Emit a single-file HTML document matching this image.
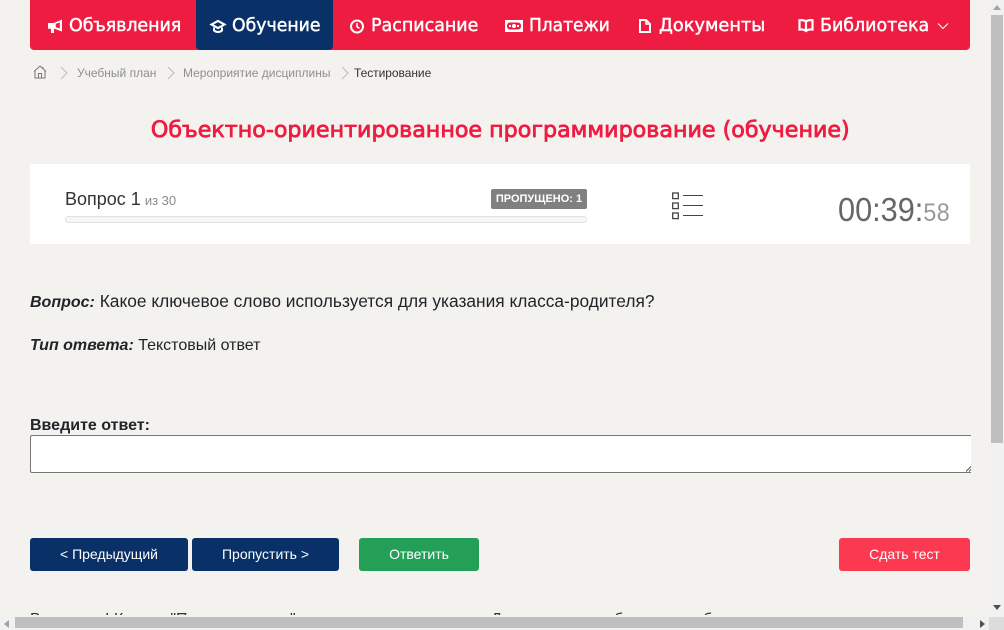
<!DOCTYPE html>
<html lang="ru"><head><meta charset="utf-8"><title>Тестирование</title>
<style>
html,body{margin:0;padding:0;width:1004px;height:630px;overflow:hidden;background:#f3f2ee;font-family:"Liberation Sans",sans-serif;color:#212529}
.a{position:absolute;white-space:nowrap}
.nav{left:30px;top:0;width:940px;height:50px;background:#ef1c42;border-radius:0 0 4px 4px}
.act{left:196px;top:0;width:137px;height:50px;background:#0a3167;border-radius:0 0 4px 4px}
.m{top:14px;height:24px;line-height:24px;font-family:"DejaVu Sans","Liberation Sans",sans-serif;font-size:18px;font-weight:400;color:#fff;-webkit-text-stroke:.45px #fff}
.m span,.h span{display:inline-block;transform-origin:0 50%}
.ic{position:absolute}
.bc{top:66px;font-size:12px;line-height:14px;color:#8f8f8f}
.h{left:0;top:116px;width:1000px;text-align:center;font-family:"DejaVu Sans","Liberation Sans",sans-serif;font-weight:400;-webkit-text-stroke:.8px #ef1c42;font-size:22px;line-height:30px;color:#ef1c42}
.btn{top:538px;height:33px;line-height:32px;border-radius:3px;color:#fff;text-align:center;font-size:14px}
.bt{position:absolute;top:0}
</style></head><body>
<div class="a nav"></div><div class="a act"></div>

<svg class="ic" style="left:47px;top:18px" width="16" height="16" viewBox="0 0 16 16" fill="#fff"><path d="M1 5h6L15 1.500v12L7.500 10.800 H7V15H4V10.800H1z"/><path d="M8.800 5.800 12.800 4.500v6L8.800 9.300z" fill="#ef1c42"/></svg>
<div class="a m" style="left:69px"><span style="letter-spacing:-.1px;transform:scaleX(.973)">Объявления</span></div>

<svg class="ic" style="left:209px;top:19px" width="18" height="15" viewBox="0 0 18 15" fill="none" stroke="#fff"><path d="M2.500 5.500 9 2l6.500 3.500L9 9z" stroke-width="2.100"/><path d="M5 8.500v3c2.200 2 5.800 2 8 0v-3" stroke-width="2"/></svg>
<div class="a m" style="left:232px"><span style="transform:scaleX(.96)">Обучение</span></div>

<svg class="ic" style="left:349px;top:18px" width="16" height="16" viewBox="0 0 16 16" fill="none" stroke="#fff" stroke-width="2"><circle cx="8" cy="8.500" r="6"/><path d="M8 5v3.800l2.500 1.500" stroke-width="1.500"/></svg>
<div class="a m" style="left:371px"><span style="transform:scaleX(.97)">Расписание</span></div>

<svg class="ic" style="left:505px;top:20px" width="18" height="12" viewBox="0 0 18 12"><rect width="18" height="12" fill="#fff"/><rect x="2" y="2.500" width="14" height="7" rx="3" fill="#ef1c42"/><circle cx="9" cy="6" r="2" fill="#fff"/><rect x="4" y="5" width="2" height="2" fill="#fff"/><rect x="12" y="5" width="2" height="2" fill="#fff"/></svg>
<div class="a m" style="left:529px"><span style="transform:scaleX(.945)">Платежи</span></div>

<svg class="ic" style="left:639px;top:19px" width="12" height="14" viewBox="0 0 12 14" fill="none" stroke="#fff" stroke-width="2"><path d="M1 1h6l4 4v8H1z"/><path d="M7 1v4h4" stroke-width="1.500"/></svg>
<div class="a m" style="left:659px"><span style="transform:scaleX(.987)">Документы</span></div>

<svg class="ic" style="left:798px;top:19px" width="16" height="14" viewBox="0 0 16 14" fill="none" stroke="#fff" stroke-width="2.200"><path d="M8 2.500C6.500 1.200 4 1 1.500 1.200v9.300C4 10.300 6.500 10.700 8 12c1.500-1.300 4-1.700 6.500-1.500V1.200C12 1 9.500 1.200 8 2.500zM8 2.500V12"/></svg>
<div class="a m" style="left:820px"><span style="transform:scaleX(.968)">Библиотека</span></div>
<svg class="ic" style="left:937px;top:22px" width="12" height="8" viewBox="0 0 12 8" fill="none" stroke="#fff" stroke-width="1"><path d="M1 1.500l5 5 5-5"/></svg>

<svg class="ic" style="left:33px;top:65px" width="14" height="14" viewBox="0 0 14 14" fill="none" stroke="#777" stroke-width="1"><path d="M1 6.500 7 1l6 5.500M2 5.500v7.500h10V5.500M5.500 13V8.500h3V13M10 2v2"/></svg>
<svg class="ic" style="left:60px;top:66px" width="8" height="14" viewBox="0 0 8 14" fill="none" stroke="#bbb"><path d="M1 1l6 6-6 6"/></svg>
<div class="a bc" style="left:77px">Учебный план</div>
<svg class="ic" style="left:167px;top:66px" width="8" height="14" viewBox="0 0 8 14" fill="none" stroke="#bbb"><path d="M1 1l6 6-6 6"/></svg>
<div class="a bc" style="left:183px">Мероприятие дисциплины</div>
<svg class="ic" style="left:341px;top:66px" width="8" height="14" viewBox="0 0 8 14" fill="none" stroke="#bbb"><path d="M1 1l6 6-6 6"/></svg>
<div class="a bc" style="left:354px;color:#333;letter-spacing:-.05px">Тестирование</div>

<div class="a h"><span style="transform:scaleX(1.009);transform-origin:50% 50%">Объектно-ориентированное программирование (обучение)</span></div>

<div class="a" style="left:30px;top:164px;width:940px;height:80px;background:#fff"></div>
<div class="a" style="left:65px;top:188px;font-size:18px;line-height:22px;color:#333">Вопрос 1 <span style="font-size:13px;color:#8a8a8a;margin-left:-1px">из 30</span></div>
<div class="a" style="left:65px;top:216px;width:520px;height:5px;border:1px solid #e2e2e2;border-radius:4px;background:#f7f7f7"></div>
<div class="a" style="left:491px;top:189px;width:96px;height:20px;background:#808080;border-radius:2px;color:#fff;font-weight:700;font-size:11px;line-height:20px;text-align:center">ПРОПУЩЕНО: 1</div>
<svg class="ic" style="left:672px;top:192px" width="32" height="29" viewBox="0 0 32 29" fill="none" stroke="#444"><rect x=".7" y="1" width="5.600" height="5.600" stroke-width="1.300"/><rect x=".7" y="11" width="5.600" height="5.600" stroke-width="1.300"/><rect x=".7" y="21" width="5.600" height="5.600" stroke-width="1.300"/><path d="M11 3.500h20M11 13.500h20M11 23.500h20" stroke-width="1"/></svg>
<div class="a" style="left:838px;top:190px;font-size:33px;line-height:40px;font-weight:400;color:#666;transform:scaleX(.93);transform-origin:0 50%">00:39:<span style="font-size:25px;color:#999;letter-spacing:.5px">58</span></div>

<div class="a" style="left:30px;top:291px;font-size:17.35px;line-height:20px"><b style="font-size:16px"><i>Вопрос:</i></b> Какое ключевое слово используется для указания класса-родителя?</div>
<div class="a" style="left:30px;top:336px;font-size:16px;line-height:20px"><b><i>Тип ответа:</i></b> Текстовый ответ</div>
<div class="a" style="left:30px;top:416px;font-size:16px;line-height:20px;font-weight:700">Введите ответ:</div>
<div class="a" style="left:30px;top:435px;width:940px;height:36px;background:#fff;border:1px solid #767676;border-right:0;border-radius:2px 0 0 2px"></div>
<svg class="ic" style="left:966px;top:466px" width="5" height="6" viewBox="0 0 5 6" stroke="#555" fill="none"><path d="M0 5.500 5 .5M3 5.500l2-2"/></svg>

<div class="a btn" style="left:30px;width:158px;background:#0a3167">&lt; Предыдущий</div>
<div class="a btn" style="left:192px;width:147px;background:#0a3167">Пропустить &gt;</div>
<div class="a btn" style="left:359px;width:120px;background:#239f57">Ответить</div>
<div class="a btn" style="left:839px;width:131px;background:#fb3a52">Сдать тест</div>

<div class="a" style="left:0;top:611px;width:989px;height:4px;overflow:hidden;font-size:16px;line-height:18px;color:#333">
<span class="bt" style="left:30px">Внимание! Кнопка "Пропустить</span><span class="bt" style="left:290px">" позволяет</span><span class="bt" style="left:491px">Далее</span><span class="bt" style="left:614px">быть</span><span class="bt" style="left:703px">быть</span></div>

<div class="a" style="left:989px;top:0;width:15px;height:617px;background:#f1f1f1"></div>
<div class="a" style="left:991px;top:15px;width:12px;height:428px;background:#bfbfbf"></div>
<svg class="ic" style="left:992px;top:4px" width="10" height="6"><path d="M1 6 5 1l4 5z" fill="#a3a3a3"/></svg>
<svg class="ic" style="left:992px;top:604px" width="10" height="6"><path d="M1 1 5 6l4-5z" fill="#505050"/></svg>
<div class="a" style="left:0;top:617px;width:989px;height:13px;background:#f1f1f1"></div>
<div class="a" style="left:15px;top:617px;width:948px;height:11px;background:#bfbfbf"></div>
<svg class="ic" style="left:3px;top:619px" width="6" height="10"><path d="M6 1 1 5l5 4z" fill="#a3a3a3"/></svg>
<svg class="ic" style="left:979px;top:619px" width="6" height="10"><path d="M1 1l5 4-5 4z" fill="#505050"/></svg>
<div class="a" style="left:989px;top:617px;width:15px;height:13px;background:#dcdcdc"></div>
</body></html>
